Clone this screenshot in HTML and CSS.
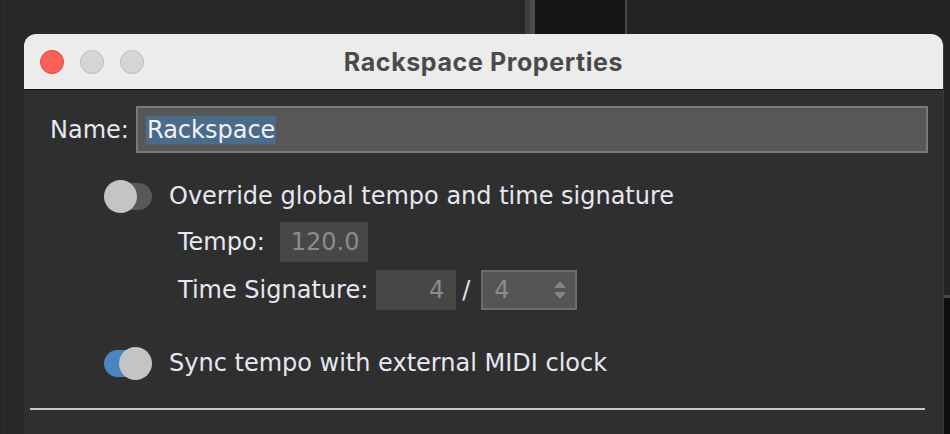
FILE: index.html
```html
<!DOCTYPE html>
<html>
<head>
<meta charset="utf-8">
<link rel="stylesheet" href="styles.css">
</head>
<body>
<div class="desktop">
  <div class="bg-col col-a"></div>
  <div class="bg-col col-b"></div>
  <div class="bg-col col-c"></div>
  <div class="bg-col col-d"></div>
  <div class="bg-col col-e">
    <div class="e-top"></div>
    <div class="e-line"></div>
    <div class="e-bottom"></div>
  </div>

  <div class="window">
    <div class="titlebar">
      <div class="lights">
        <span class="light red"></span>
        <span class="light grey"></span>
        <span class="light grey"></span>
      </div>
      <div class="title">Rackspace Properties</div>
    </div>
    <div class="content">
      <div class="name-row">
        <span class="label">Name:</span>
        <div class="name-input"><span class="sel">Rackspace</span></div>
      </div>
      <div class="toggle-row first">
        <span class="toggle"><span class="knob"></span></span>
        <span class="text">Override global tempo and time signature</span>
      </div>
      <div class="field-row tempo-row">
        <span class="label">Tempo:</span>
        <span class="field tempo">120.0</span>
      </div>
      <div class="field-row sig-row">
        <span class="label">Time Signature:</span>
        <span class="field num">4</span>
        <span class="slash">/</span>
        <span class="field combo">
          <span>4</span>
          <svg class="spin" width="14" height="20" viewBox="0 0 14 20"><path d="M7 1 L13 8 H1 Z M7 19 L13 12 H1 Z" fill="#858585"/></svg>
        </span>
      </div>
      <div class="toggle-row second">
        <span class="toggle on"><span class="knob"></span></span>
        <span class="text">Sync tempo with external MIDI clock</span>
      </div>
      <div class="separator"></div>
    </div>
  </div>
</div>
</body>
</html>
```
FILE: styles.css
```css
html, body {
  margin: 0;
  padding: 0;
}
body {
  width: 950px;
  height: 434px;
  overflow: hidden;
  background: #262626;
  font-family: "DejaVu Sans", sans-serif;
}
.desktop {
  position: relative;
  width: 950px;
  height: 434px;
  display: flex;
}
.bg-col { height: 100%; }
.col-a {
  width: 525px;
  background: #282828;
  box-shadow: inset 3px 0 0 #282828, inset 4px 0 0 #323232;
}
.col-b {
  width: 10px;
  background: linear-gradient(to right, #3e3e3e 0 5px, #4c4c4c 5px);
}
.col-c { width: 90px; background: #151515; }
.col-d { width: 2px; background: #4a4a4a; }
.col-e {
  flex: 1;
  display: flex;
  flex-direction: column;
}
.e-top { height: 295px; background: #232323; }
.e-line { height: 3px; background: #474747; }
.e-bottom { flex: 1; background: #0e0e0e; }

.window {
  position: absolute;
  left: 24px;
  top: 34px;
  width: 919px;
  height: 420px;
  border-radius: 12px 12px 0 0;
  overflow: hidden;
  background: #2f2f2f;
  box-shadow: 1px 0 0 #3a3a3a;
}
.titlebar {
  position: relative;
  height: 55px;
  background: #ececea;
  border-bottom: 1px solid #121212;
  display: flex;
  align-items: center;
  justify-content: center;
}
.lights {
  position: absolute;
  left: 16px;
  top: 16px;
  display: flex;
  gap: 16px;
}
.light {
  width: 22px;
  height: 22px;
  border-radius: 50%;
  display: block;
}
.light.red { background: #fe5f57; border: 1px solid #e0443e; }
.light.grey { background: #d6d6d4; border: 1px solid #bcbcba; }
.title {
  font-family: Inter, "Liberation Sans", sans-serif;
  font-weight: 700;
  font-size: 25px;
  color: #4a4a4a;
  letter-spacing: 0.6px;
  margin-top: 1px;
}

.content {
  color: #e7e6f3;
  font-size: 24px;
}
.name-row {
  display: flex;
  align-items: center;
  margin-top: 16px;
  padding-left: 26px;
}
.name-row .label { width: 86px; }
.name-input {
  width: 780px;
  height: 43px;
  border: 2px solid #7a7a7a;
  background: #575757;
  display: flex;
  align-items: center;
  padding-left: 8px;
  box-sizing: content-box;
}
.sel {
  background: #4b6b8b;
  color: #f2f2f8;
  line-height: 28px;
  padding: 0 1px;
}
.toggle-row {
  display: flex;
  align-items: center;
  padding-left: 80px;
}
.toggle-row.first { margin-top: 29px; }
.toggle-row.second { margin-top: 39px; }
.toggle {
  position: relative;
  width: 48px;
  height: 27px;
  border-radius: 14px;
  background: #585858;
  display: block;
}
.toggle.on { background: #4a85bf; }
.knob {
  position: absolute;
  left: 0;
  top: -3px;
  width: 33px;
  height: 33px;
  border-radius: 50%;
  background: #c4c4c4;
}
.toggle.on .knob { left: auto; right: 0; }
.toggle-row .text { margin-left: 17px; }

.field-row {
  display: flex;
  align-items: center;
  padding-left: 154px;
}
.tempo-row { margin-top: 12px; }
.sig-row { margin-top: 8px; }
.field {
  height: 40px;
  display: flex;
  align-items: center;
  color: #8c8c8c;
  background: #474747;
  box-sizing: border-box;
}
.tempo {
  margin-left: 15px;
  width: 88px;
  padding-left: 11px;
}
.num {
  margin-left: 8px;
  width: 80px;
  justify-content: flex-end;
  padding-right: 12px;
}
.slash { margin: 0 11px 0 6px; color: #e0e0ee; }
.combo {
  width: 96px;
  border: 2px solid #6c6c6c;
  background: #555555;
  padding-left: 11px;
  padding-right: 8px;
  justify-content: space-between;
}
.separator {
  margin: 31px 18px 0 6px;
  height: 2px;
  background: #c9c7d3;
}
```
